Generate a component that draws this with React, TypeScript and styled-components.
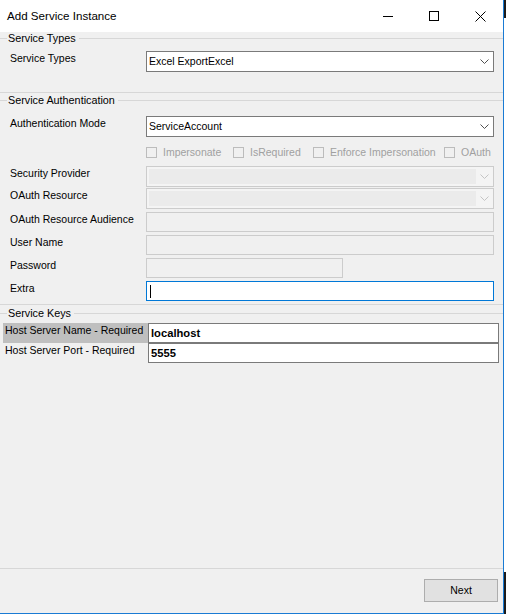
import React from "react";
import styled, { createGlobalStyle } from "styled-components";

const Global = createGlobalStyle`
  html, body { margin: 0; padding: 0; background: #ffffff; }
  body {
    font-family: "Liberation Sans", Arial, sans-serif;
    font-size: 10.5px;
    color: #000000;
  }
  * { box-sizing: border-box; }
`;

const Screen = styled.div`
  display: flex;
  width: 506px;
  height: 614px;
  overflow: hidden;
`;

const Window = styled.div`
  width: 504px;
  height: 614px;
  flex-shrink: 0;
  display: flex;
  flex-direction: column;
  background: #f0f0f0;
  border-right: 1px solid #1a7bd4;
  border-bottom: 1px solid #1a7bd4;
`;

const Outside = styled.div`
  flex: 1;
  display: flex;
  flex-direction: column;
  background: #ffffff;
`;

const OutsideDark = styled.div<{ $h: number }>`
  height: ${(p) => p.$h}px;
  background: #1b1b1b;
`;

const OutsideFill = styled.div`
  flex: 1;
`;

const TitleBar = styled.div`
  height: 32px;
  flex-shrink: 0;
  display: flex;
  align-items: center;
  background: #ffffff;
`;

const Title = styled.div`
  flex: 1;
  padding-left: 7px;
  font-size: 11.6px;
  line-height: 16px;
  color: #000;
`;

const CaptionButton = styled.div`
  width: 46px;
  height: 32px;
  display: flex;
  align-items: center;
  justify-content: center;
`;

const Body = styled.div`
  flex: 1;
  display: flex;
  flex-direction: column;
`;

const Group = styled.section<{ $mt: number; $pb: number; $grow?: boolean }>`
  margin-top: ${(p) => p.$mt}px;
  padding-bottom: ${(p) => p.$pb}px;
  border-bottom: 1px solid #d7d7d7;
  display: flex;
  flex-direction: column;
  flex: ${(p) => (p.$grow ? "1" : "none")};
`;

const GroupHeader = styled.div`
  height: 13px;
  display: flex;
  align-items: center;
`;

const HeaderLineShort = styled.div`
  width: 7px;
  height: 1px;
  background: #d7d7d7;
`;

const HeaderLine = styled.div`
  flex: 1;
  height: 1px;
  background: #d7d7d7;
`;

const HeaderLabel = styled.span`
  padding: 0 3px 0 1px;
  font-size: 10.8px;
  line-height: 13px;
  white-space: nowrap;
`;

const Row = styled.div<{ $mt: number }>`
  display: flex;
  align-items: flex-start;
  margin-top: ${(p) => p.$mt}px;
  padding-left: 10px;
`;

const Label = styled.div`
  width: 136px;
  flex-shrink: 0;
  line-height: 13px;
  padding-top: 1px;
  white-space: nowrap;
`;

const ComboBox = styled.div<{ $disabled?: boolean }>`
  position: relative;
  width: 348px;
  height: 21px;
  display: flex;
  align-items: center;
  border: 1px solid ${(p) => (p.$disabled ? "#cccccc" : "#7a7a7a")};
  background: ${(p) => (p.$disabled ? "#f4f4f4" : "#ffffff")};
  padding: 2px 0 2px 2px;
`;

const ComboText = styled.div`
  flex: 1;
  line-height: 13px;
  white-space: nowrap;
`;

const ComboField = styled.div`
  flex: 1;
  align-self: stretch;
  background: #ebebeb;
`;

const ComboArrow = styled.div`
  width: 17px;
  height: 100%;
  display: flex;
  align-items: center;
  justify-content: center;
  flex-shrink: 0;
`;

const TextBox = styled.div<{ $w: number; $focused?: boolean; $disabled?: boolean }>`
  width: ${(p) => p.$w}px;
  height: 20px;
  border: 1px solid
    ${(p) => (p.$focused ? "#0078d7" : p.$disabled ? "#cccccc" : "#7a7a7a")};
  background: ${(p) => (p.$disabled ? "#f0f0f0" : "#ffffff")};
  display: flex;
  align-items: center;
  padding-left: 3px;
`;

const Caret = styled.div`
  width: 1px;
  height: 13px;
  background: #000;
`;

const CheckRow = styled.div`
  display: flex;
  align-items: center;
  height: 13px;
  margin-top: 9px;
  padding-left: 146px;
`;

const CheckItem = styled.div<{ $w?: number }>`
  display: flex;
  align-items: center;
  width: ${(p) => (p.$w ? `${p.$w}px` : "auto")};
  flex-shrink: 0;
`;

const CheckBox = styled.div`
  width: 11px;
  height: 11px;
  border: 1px solid #bcbcbc;
  background: #f0f0f0;
  flex-shrink: 0;
`;

const CheckText = styled.span`
  margin-left: 6px;
  color: #a0a0a0;
  line-height: 13px;
  white-space: nowrap;
`;

const KeyRow = styled.div<{ $mt: number }>`
  display: flex;
  align-items: stretch;
  margin-top: ${(p) => p.$mt}px;
  padding-left: 3px;
`;

const KeyLabel = styled.div<{ $selected?: boolean }>`
  width: 145px;
  height: 20px;
  flex-shrink: 0;
  padding: 1px 0 0 2px;
  line-height: 13px;
  background: ${(p) => (p.$selected ? "#bfbfbf" : "transparent")};
  white-space: nowrap;
  overflow: hidden;
`;

const KeyInput = styled.div`
  width: 351px;
  height: 20px;
  border: 1px solid #7a7a7a;
  background: #ffffff;
  padding: 2px 0 0 2px;
  font-weight: bold;
  font-size: 11.2px;
  line-height: 14px;
`;

const Footer = styled.div`
  height: 44px;
  flex-shrink: 0;
  display: flex;
  justify-content: flex-end;
  align-items: flex-start;
  padding: 10px 5px 0 0;
`;

const Button = styled.div`
  width: 74px;
  height: 23px;
  border: 1px solid #adadad;
  background: #e1e1e1;
  display: flex;
  align-items: center;
  justify-content: center;
  line-height: 13px;
`;

const Chevron: React.FC<{ color: string }> = ({ color }) => (
  <svg width="9" height="5" viewBox="0 0 9 5">
    <polyline
      points="0.5,0.5 4.5,4.5 8.5,0.5"
      fill="none"
      stroke={color}
      strokeWidth="1"
    />
  </svg>
);

const Combo: React.FC<{ value?: string; disabled?: boolean }> = ({ value, disabled }) => (
  <ComboBox $disabled={disabled}>
    {disabled ? <ComboField /> : <ComboText>{value}</ComboText>}
    <ComboArrow>
      <Chevron color={disabled ? "#c4c4c4" : "#505050"} />
    </ComboArrow>
  </ComboBox>
);

const Check: React.FC<{ label: string; w?: number }> = ({ label, w }) => (
  <CheckItem $w={w}>
    <CheckBox />
    <CheckText>{label}</CheckText>
  </CheckItem>
);

export default function App() {
  return (
    <>
      <Global />
      <Screen>
        <Window>
          <TitleBar>
            <Title>Add Service Instance</Title>
            <CaptionButton>
              <svg width="10" height="10" viewBox="0 0 10 10">
                <line x1="0" y1="5.5" x2="10" y2="5.5" stroke="#000" strokeWidth="1" />
              </svg>
            </CaptionButton>
            <CaptionButton>
              <svg width="10" height="10" viewBox="0 0 10 10">
                <rect x="0.5" y="0.5" width="9" height="9" fill="none" stroke="#000" strokeWidth="1" />
              </svg>
            </CaptionButton>
            <CaptionButton>
              <svg width="11" height="11" viewBox="0 0 11 11">
                <line x1="0.5" y1="0.5" x2="10.5" y2="10.5" stroke="#000" strokeWidth="1" />
                <line x1="10.5" y1="0.5" x2="0.5" y2="10.5" stroke="#000" strokeWidth="1" />
              </svg>
            </CaptionButton>
          </TitleBar>
          <Body>
            <Group $mt={0} $pb={20}>
              <GroupHeader>
                <HeaderLineShort />
                <HeaderLabel>Service Types</HeaderLabel>
                <HeaderLine />
              </GroupHeader>
              <Row $mt={6}>
                <Label>Service Types</Label>
                <Combo value="Excel ExportExcel" />
              </Row>
            </Group>

            <Group $mt={1} $pb={3}>
              <GroupHeader>
                <HeaderLineShort />
                <HeaderLabel>Service Authentication</HeaderLabel>
                <HeaderLine />
              </GroupHeader>
              <Row $mt={9}>
                <Label>Authentication Mode</Label>
                <Combo value="ServiceAccount" />
              </Row>
              <CheckRow>
                <Check label="Impersonate" w={87} />
                <Check label="IsRequired" w={80} />
                <Check label="Enforce Impersonation" w={131} />
                <Check label="OAuth" />
              </CheckRow>
              <Row $mt={7}>
                <Label>Security Provider</Label>
                <Combo disabled />
              </Row>
              <Row $mt={1}>
                <Label>OAuth Resource</Label>
                <Combo disabled />
              </Row>
              <Row $mt={3}>
                <Label>OAuth Resource Audience</Label>
                <TextBox $w={348} $disabled />
              </Row>
              <Row $mt={3}>
                <Label>User Name</Label>
                <TextBox $w={348} $disabled />
              </Row>
              <Row $mt={3}>
                <Label>Password</Label>
                <TextBox $w={197} $disabled />
              </Row>
              <Row $mt={3}>
                <Label>Extra</Label>
                <TextBox $w={348} $focused>
                  <Caret />
                </TextBox>
              </Row>
            </Group>

            <Group $mt={2} $pb={0} $grow>
              <GroupHeader>
                <HeaderLineShort />
                <HeaderLabel>Service Keys</HeaderLabel>
                <HeaderLine />
              </GroupHeader>
              <KeyRow $mt={3}>
                <KeyLabel $selected>Host Server Name - Required</KeyLabel>
                <KeyInput>localhost</KeyInput>
              </KeyRow>
              <KeyRow $mt={0}>
                <KeyLabel>Host Server Port - Required</KeyLabel>
                <KeyInput>5555</KeyInput>
              </KeyRow>
            </Group>

            <Footer>
              <Button>Next</Button>
            </Footer>
          </Body>
        </Window>
        <Outside>
          <OutsideDark $h={18} />
          <OutsideFill />
          <OutsideDark $h={42} />
        </Outside>
      </Screen>
    </>
  );
}
